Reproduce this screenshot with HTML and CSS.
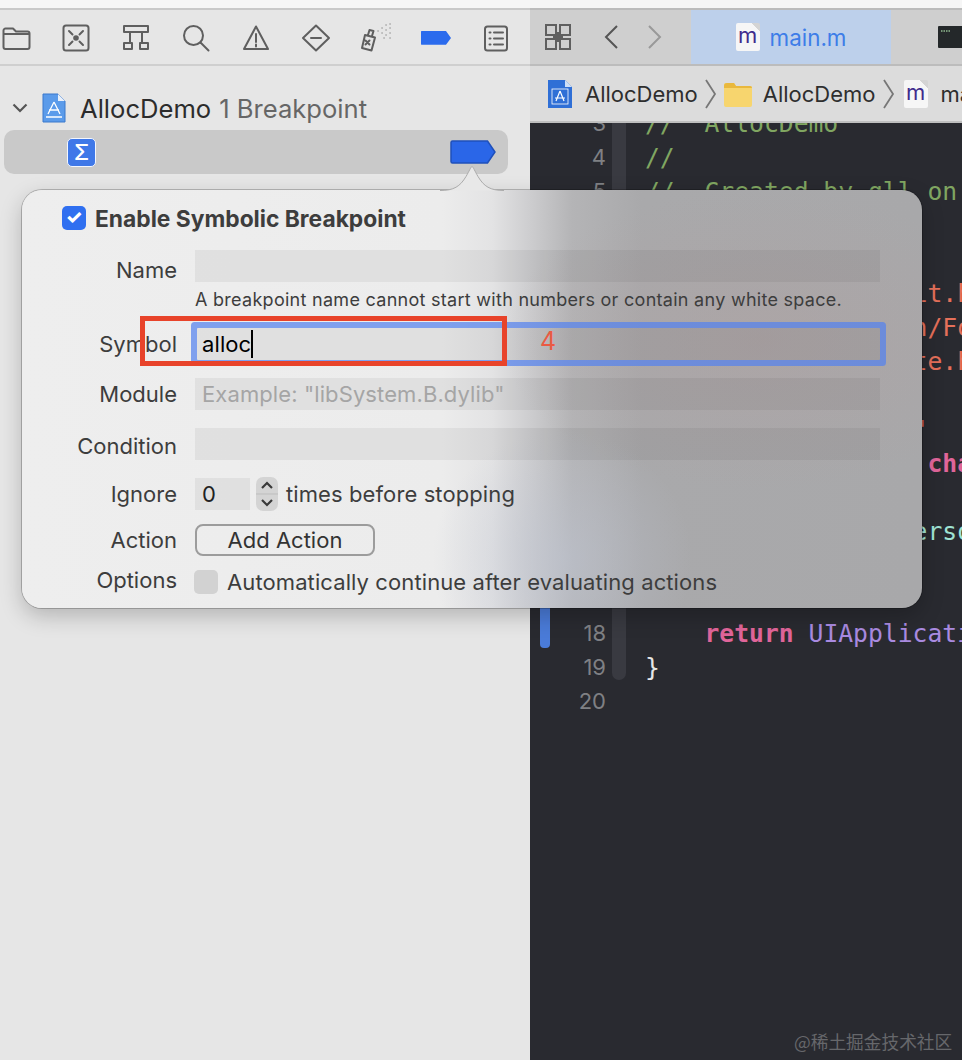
FILE: index.html
```
<!DOCTYPE html>
<html lang="en">
<head>
<meta charset="utf-8">
<title>AllocDemo</title>
<link rel="stylesheet" href="styles.css">
</head>
<body>
<div class="strip"></div>
<div class="workspace">
  <aside class="sidebar">
    <nav class="tools">
      <svg class="tool" viewBox="0 0 32 32"><path d="M3.500 11V8.500a2 2 0 0 1 2-2h7.500l3 3h11.500a2 2 0 0 1 2 2V25a2 2 0 0 1-2 2H5.500a2 2 0 0 1-2-2zM3.500 12H29.500"/></svg>
      <svg class="tool" viewBox="0 0 32 32"><rect x="3.500" y="3.500" width="25" height="25" rx="2.500"/><circle class="solid" cx="16" cy="16" r="2.800"/><path d="M9 9l3.500 3.500M23 9l-3.500 3.500M9 23l3.500-3.500M23 23l-3.500-3.500"/></svg>
      <svg class="tool" viewBox="0 0 32 32"><path d="M4 4h24v6H4zM10 10v11M22 10v11M4 21h8v6H4zM20 21h8v6h-8z"/></svg>
      <svg class="tool" viewBox="0 0 32 32"><circle cx="13.500" cy="13.500" r="9.500"/><path d="M20.500 20.500l8 8" /></svg>
      <svg class="tool" viewBox="0 0 32 32"><path d="M16 4.500L28 27H4zM16 12v8M16 22.500v2"/></svg>
      <svg class="tool" viewBox="0 0 32 32"><path d="M16 3.500L29 16 16 28.500 3 16zM11 16h10"/></svg>
      <svg class="tool" viewBox="0 0 32 32"><path d="M5 13l10 2.500-3.500 13L2 26zM8 13l1.500-5 4 1-1.500 5M5.500 18.500l4 4M9.500 18.500l-4 4"/><path class="dots" d="M18 9h.1M22 6h.1M26 3h.1M30 2h.1M22 11h.1M26 8h.1M30 6h.1M26 13h.1M30 11h.1M24 16h.1M30 16h.1"/></svg>
      <svg class="tool" viewBox="0 0 32 32"><path class="blue" d="M1 6.500a.5.5 0 0 1 .5-.5H26l5 10-5 10H1.500a.5.5 0 0 1-.5-.5z" transform="translate(0 5) scale(1 .68)"/></svg>
      <svg class="tool" viewBox="0 0 32 32"><rect x="5" y="4.500" width="22" height="24" rx="2.500"/><path d="M9.500 10.500h1M14 10.500h9M9.500 16.500h1M14 16.500h9M9.500 22.500h1M14 22.500h9"/></svg>
    </nav>
    <div class="tree-head">
      <svg class="caret" viewBox="0 0 16 10"><path d="M1.500 1.500L8 8l6.500-6.500"/></svg>
      <svg class="project" viewBox="0 0 24 30"><path d="M1 1h15l7 7v21H1z" fill="#5b9bea" stroke="#3b78cc"/><path d="M16 1v7h7z" fill="#e9f0fa"/><path d="M12 9l-6 12M12 9l6 12M7 17h10M4 24h16" fill="none" stroke="#fff" stroke-width="1.300"/></svg>
      <span class="tree-name">AllocDemo</span>
      <span class="tree-count">1 Breakpoint</span>
    </div>
    <div class="tree-row">
      <span class="sigma">Σ</span>
      <svg class="row-tag" viewBox="0 0 46 24"><path d="M2.500 1h35L45 12l-7.500 11h-35A1.500 1.500 0 0 1 1 21.500v-19A1.500 1.500 0 0 1 2.500 1z" fill="#2a66e8" stroke="#1f50bb" stroke-width="1.500"/></svg>
    </div>
  </aside>
  <main class="pane">
    <div class="tabbar">
      <svg class="grid-icon" viewBox="0 0 26 26"><path d="M1 1h10v10H1zM15 1h10v10H15zM1 15h10v10H1zM15 15h10v10H15zM8 13h10M13 8v10"/></svg>
      <svg class="nav back" viewBox="0 0 14 24"><path d="M13 1L2 12l11 11"/></svg>
      <svg class="nav fwd" viewBox="0 0 14 24"><path d="M1 1l11 11L1 23"/></svg>
      <div class="tab">
        <span class="mdoc">m</span>
        <span class="tab-name">main.m</span>
      </div>
      <svg class="term" viewBox="0 0 30 22"><rect width="30" height="22" rx="1" fill="#24282a"/><path d="M3 5h9" stroke="#8fb98f" stroke-width="1.500" stroke-dasharray="1.500 1"/></svg>
    </div>
    <div class="jumpbar">
      <svg class="crumb-app" viewBox="0 0 24 28"><path d="M0 0h17l7 7v21H0z" fill="#2f6fd6"/><path d="M17 0v7h7z" fill="#cfe0f7"/><rect x="4" y="9" width="16" height="15" fill="none" stroke="#fff" stroke-width=".8"/><path d="M12 11l-4 10M12 11l4 10M7 18h10" fill="none" stroke="#fff" stroke-width="1.200"/></svg>
      <span class="crumb">AllocDemo</span>
      <svg class="sep" viewBox="0 0 12 30"><path d="M1 1l9 14-9 14"/></svg>
      <svg class="crumb-folder" viewBox="0 0 28 26"><path d="M0 4a2 2 0 0 1 2-2h8l2 3h14a2 2 0 0 1 2 2v17a2 2 0 0 1-2 2H2a2 2 0 0 1-2-2z" fill="#f7d56e"/><path d="M0 5a3 3 0 0 1 3-3h7l2 3h14a2 2 0 0 1 2 2H0z" fill="#e9b83d"/></svg>
      <span class="crumb after-folder">AllocDemo</span>
      <svg class="sep" viewBox="0 0 12 30"><path d="M1 1l9 14-9 14"/></svg>
      <span class="mdoc crumb-m">m</span>
      <span class="crumb">main.m</span>
    </div>
    <div class="code">
      <div class="line"><i class="mark"></i><b class="num">3</b><i class="rail"></i><code class="cm">//  AllocDemo</code></div>
      <div class="line"><i class="mark"></i><b class="num">4</b><i class="rail"></i><code class="cm">//</code></div>
      <div class="line"><i class="mark"></i><b class="num">5</b><i class="rail"></i><code class="cm">//  Created by gll on</code></div>
      <div class="line"><i class="mark"></i><b class="num">6</b><i class="rail"></i><code class="cm">//</code></div>
      <div class="line"><i class="mark"></i><b class="num">7</b><i class="rail"></i><code></code></div>
      <div class="line"><i class="mark"></i><b class="num">8</b><i class="rail"></i><code class="str">#import &lt;UIKit/UIKit.h&gt;</code></div>
      <div class="line"><i class="mark"></i><b class="num">9</b><i class="rail"></i><code class="str">#import &lt;Foundation/Foundation.h&gt;</code></div>
      <div class="line"><i class="mark"></i><b class="num">10</b><i class="rail"></i><code class="str">#import "AppDelegate.h"</code></div>
      <div class="line"><i class="mark"></i><b class="num">11</b><i class="rail"></i><code></code></div>
      <div class="line"><i class="mark"></i><b class="num">12</b><i class="rail"></i><code class="str">#import "LPerson.h"</code></div>
      <div class="line"><i class="mark"></i><b class="num">13</b><i class="rail"></i><code>int main(int argc, <span class="kw">char</span></code></div>
      <div class="line"><i class="mark"></i><b class="num">14</b><i class="rail"></i><code></code></div>
      <div class="line"><i class="mark"></i><b class="num">15</b><i class="rail"></i><code class="cls">    Person *p = [Person</code></div>
      <div class="line"><i class="mark"></i><b class="num">16</b><i class="rail"></i><code class="dim">                  '</code></div>
      <div class="line"><i class="mark on"></i><b class="num">17</b><i class="rail"></i><code></code></div>
      <div class="line"><i class="mark on end"></i><b class="num">18</b><i class="rail"></i><code>    <span class="kw">return</span> <span class="fn">UIApplicationMain</span></code></div>
      <div class="line"><i class="mark"></i><b class="num">19</b><i class="rail end"></i><code>}</code></div>
      <div class="line"><i class="mark"></i><b class="num">20</b><code></code></div>
    </div>
  </main>
</div>

<section class="popover">
  <svg class="beak" viewBox="0 0 64 26"><path d="M0 25.500c14 0 20-4 26-14 3-5 5-10 6-10s3 5 6 10c6 10 12 14 26 14"/></svg>
  <label class="title"><span class="check">✓</span>Enable Symbolic Breakpoint</label>
  <div class="row row-name"><span class="label drop">Name</span><span class="field"></span></div>
  <div class="row row-hint"><span></span><span class="hint">A breakpoint name cannot start with numbers or contain any white space.</span></div>
  <div class="row"><span class="label">Symbol</span><span class="field focus"><span class="typed">alloc</span></span></div>
  <div class="row gap"><span class="label">Module</span><span class="field ghost">Example: "libSystem.B.dylib"</span></div>
  <div class="row gap"><span class="label low">Condition</span><span class="field"></span></div>
  <div class="row gap"><span class="label">Ignore</span>
    <span class="inline">
      <span class="field count">0</span>
      <span class="stepper"><svg viewBox="0 0 22 34"><path d="M6 11l5-5 5 5M6 23l5 5 5-5"/><path class="mid" d="M0 17h22"/></svg></span>
      <span class="after">times before stopping</span>
    </span>
  </div>
  <div class="row act"><span class="label">Action</span><span class="inline"><button class="add" type="button">Add Action</button></span></div>
  <div class="row opt"><span class="label high">Options</span>
    <span class="inline short"><span class="box"></span><span class="after auto">Automatically continue after evaluating actions</span></span>
  </div>
</section>

<div class="callout"></div>
<span class="callout-num">4</span>
<span class="mark-text">@稀土掘金技术社区</span>
</body>
</html>
```
FILE: styles.css
```
* { box-sizing: border-box; }
html, body { margin: 0; height: 1060px; overflow: hidden; }
body { background: #e6e6e6; font-family: Inter, "Noto Sans", sans-serif; color: #3d3d3d; position: relative; }

.strip { height: 8px; background: #f6f6f6; }
.workspace { display: flex; height: 1052px; }

.sidebar { width: 530px; flex: none; background: #e6e6e6; }
.tools { height: 58px; border-top: 2px solid #c9c9c9; border-bottom: 2px solid #cfcfcf; display: flex; align-items: center; gap: 28px; padding-top: 1px; }
.tool { width: 32px; height: 32px; flex: none; fill: none; stroke: #5f5f5f; stroke-width: 2; stroke-linejoin: round; stroke-linecap: round; }
.tool .solid { fill: #5f5f5f; stroke: none; }
.tool .dots { stroke-width: 1.300; stroke: #8a8a8a; }
.tool .blue { fill: #2b6bed; stroke: none; }

.tree-head { display: flex; align-items: center; height: 64px; padding: 20px 0 0 12px; }
.caret { width: 16px; height: 10px; fill: none; stroke: #555; stroke-width: 2.200; flex: none; }
.project { width: 24px; height: 30px; margin-left: 14px; flex: none; }
.tree-name { font-size: 25.600px; color: #2c2c2c; margin-left: 14px; }
.tree-count { font-size: 25.600px; color: #666; margin-left: 8px; }
.tree-row { height: 44px; margin: 0 22px 0 4px; border-radius: 10px; background: #c9c9c9; display: flex; align-items: center; justify-content: space-between; padding: 0 12px 0 63px; }
.sigma { width: 29px; height: 29px; border-radius: 5px; background: #3f78e8; border: 1.500px solid #f2f6ff; color: #fff; font-size: 22px; font-weight: 500; display: flex; align-items: center; justify-content: center; }
.row-tag { width: 46px; height: 24px; }

.pane { flex: 1; min-width: 0; display: flex; flex-direction: column; }
.tabbar { height: 58px; background: #cfcfcf; border-top: 2px solid #bcbcbc; border-bottom: 2px solid #bcbcbc; display: flex; align-items: center; padding-left: 15px; overflow: hidden; }
.grid-icon { width: 26px; height: 26px; fill: none; stroke: #5f5f5f; stroke-width: 2; flex: none; }
.nav { width: 14px; height: 24px; fill: none; stroke-width: 2; flex: none; }
.back { margin-left: 33px; stroke: #555; }
.fwd { margin-left: 30px; stroke: #999; }
.tab { width: 200px; height: 54px; margin-left: 29px; background: #bdd0eb; display: flex; align-items: center; justify-content: center; gap: 10px; flex: none; }
.tab-name { font-size: 22.400px; color: #3d7de8; }
.mdoc { width: 24px; height: 28px; background: linear-gradient(225deg, #d4d4d4 6px, #f6f6f6 6px); color: #3f2b8c; font-size: 22px; line-height: 24px; text-align: center; display: inline-block; border-radius: 2px; flex: none; }
.term { width: 30px; height: 22px; margin-left: 47px; flex: none; }

.jumpbar { height: 57px; background: #dcdcdc; border-bottom: 2px solid #bfbfbf; display: flex; align-items: center; padding-left: 18px; overflow: hidden; white-space: nowrap; }
.crumb-app { width: 24px; height: 28px; flex: none; }
.crumb { font-size: 22px; color: #2e2e2e; margin-left: 13px; }
.after-folder { margin-left: 11px; }
.sep { width: 12px; height: 30px; margin-left: 7px; fill: none; stroke: #777; stroke-width: 1.800; flex: none; }
.crumb-folder { width: 28px; height: 26px; margin-left: 7px; flex: none; }
.crumb-m { margin-left: 9px; }

.code { flex: 1; background: #292a30; overflow: hidden; }
.line { height: 34px; display: flex; align-items: center; padding-left: 10px; }
.line:first-child { margin-top: -17px; }
.mark { width: 10px; height: 34px; flex: none; }
.mark.on { background: #4a7bd8; }
.mark.end { border-radius: 0 0 4px 4px; height: 32px; align-self: flex-start; }
.num { width: 56px; font-weight: 400; font-size: 22px; color: #7f8084; text-align: right; flex: none; }
.rail { width: 14px; height: 34px; margin-left: 6px; background: #393a41; flex: none; }
.rail.end { border-radius: 0 0 7px 7px; height: 30px; align-self: flex-start; }
.line code { margin-left: 19px; font-family: "DejaVu Sans Mono", monospace; font-size: 24.700px; color: #e6e6e6; white-space: pre; }
.line .cm { color: #80a661; }
.line .str { color: #e5705a; }
.line .cls { color: #9fe3d4; }
.line .kw { color: #e0659a; font-weight: 700; }
.line .fn { color: #a98ae0; }
.line .dim { color: #5c5d62; }

.popover { position: absolute; left: 22px; top: 190px; width: 900px; height: 418px; padding-top: 14px; border-radius: 20px;
  background:
    radial-gradient(ellipse 260px 150px at 740px 150px, rgba(176, 160, 160, .45), rgba(176, 160, 160, 0)),
    radial-gradient(ellipse 130px 130px at 540px 370px, rgba(190, 196, 210, .55), rgba(190, 196, 210, 0)),
    linear-gradient(90deg, #eeeeee 0, #ececec 420px, #e3e3e4 470px, #cdcdcf 508px, #b4b4b6 550px, #a9a9ab 620px, #a8a8aa 100%);
  box-shadow: 0 0 0 1px rgba(0, 0, 0, .22), 0 8px 22px rgba(0, 0, 0, .22); }
.beak { position: absolute; left: 418px; top: -25px; width: 64px; height: 26px; fill: #e8e8e8; stroke: #ababab; stroke-width: 1; }
.title { display: flex; align-items: center; height: 28px; padding-left: 40px; font-size: 22.800px; font-weight: 700; color: #3d3d3d; }
.check { width: 24px; height: 24px; margin-right: 9px; border-radius: 5px; background: #2f6ff0; color: #fff; font-size: 19px; line-height: 24px; font-weight: 800; text-align: center; }
.row { display: grid; grid-template-columns: 155px 685px; column-gap: 18px; align-items: center; height: 32px; }
.row-name { margin-top: 18px; }
.row-hint { align-items: start; height: 46px; padding-top: 6px; }
.gap { margin-top: 18px; }
.act { margin-top: 14px; }
.opt { margin-top: 12px; height: 24px; }
.label { font-size: 22px; line-height: 24px; color: #3d3d3d; text-align: right; }
.label.drop { padding-top: 8px; }
.label.low { padding-top: 4px; }
.label.high { padding-bottom: 4px; }
.field { display: block; height: 32px; background: rgba(0, 0, 0, .05); padding-left: 7px; font-size: 22px; letter-spacing: .1px; line-height: 32px; }
.ghost { color: #a5a5a5; }
.focus { margin-left: 2px; padding-left: 5px; color: #000; box-shadow: 0 0 0 6px rgba(84, 130, 238, .72); border-radius: 1px; }
.typed { display: inline-block; height: 28px; line-height: 28px; border-right: 2px solid #000; }
.hint { font-size: 18px; letter-spacing: .28px; line-height: 24px; color: #3d3d3d; white-space: nowrap; }
.inline { display: flex; align-items: center; height: 32px; }
.inline.short { height: 24px; }
.count { width: 55px; flex: none; color: #222; }
.stepper { width: 22px; height: 34px; margin: -1px 0 -1px 6px; border-radius: 7px; background: rgba(0, 0, 0, .1); flex: none; }
.stepper svg { display: block; width: 22px; height: 34px; fill: none; stroke: #3a3a3a; stroke-width: 2.200; }
.stepper .mid { stroke: #bdbdbd; stroke-width: 1; }
.after { font-size: 22px; letter-spacing: .1px; margin-left: 8px; color: #3d3d3d; white-space: nowrap; }
.auto { margin-left: 9px; }
.add { width: 180px; height: 32px; padding: 0; border: 2px solid #9c9c9c; border-radius: 8px; background: transparent; font: 400 22px Inter, sans-serif; color: #333; }
.box { width: 24px; height: 24px; border-radius: 5px; background: #d2d2d2; margin-left: -1px; flex: none; }

.callout { position: absolute; left: 140px; top: 316px; width: 367px; height: 50px; border: 5px solid #e8432a; }
.callout-num { position: absolute; left: 540px; top: 324px; font-size: 25px; line-height: 34px; font-weight: 400; color: #ea5a43; }
.mark-text { position: absolute; left: 794px; top: 1030px; font: 17.700px/22px "Noto Sans CJK SC", sans-serif; color: #66676b; white-space: nowrap; }
```
